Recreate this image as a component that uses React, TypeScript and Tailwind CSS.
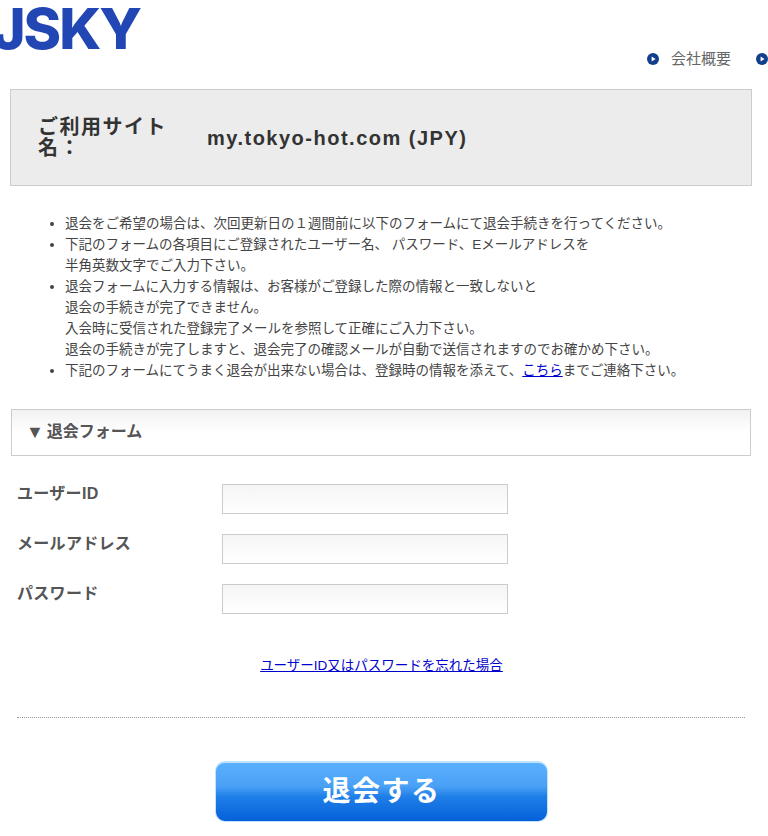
function NavDot() {
  return (
    <svg width="12" height="12" viewBox="0 0 12 12" className="shrink-0">
      <circle cx="6" cy="6" r="6" fill="#123f8c" />
      <path d="M4.6 3.6 L8.6 6 L4.6 8.4 Z" fill="#ffffff" />
    </svg>
  );
}

function Field({ label }: { label: string }) {
  return (
    <div className="flex h-[30px] items-start">
      <label className="w-[211px] pl-[6px] text-[16px] leading-[20px] font-bold tracking-[0.3px] text-[#555]">
        {label}
      </label>
      <input className="h-[30px] w-[286px] border border-[#ccc] bg-gradient-to-b from-[#f5f5f5] to-white" />
    </div>
  );
}

export default function App() {
  return (
    <div className="h-[836px] w-[768px] overflow-hidden bg-white text-[#444] font-['Liberation_Sans','Noto_Sans_CJK_JP',sans-serif]">
      <header className="flex h-[89px] items-start justify-between overflow-hidden">
        <div className="-ml-[8px] mt-[-6px] text-[57px] leading-[70px] font-extrabold tracking-[-2px] text-[#2247b5] font-['Inter',sans-serif]">
          JSKY
        </div>
        <nav className="mt-[49px] flex items-center text-[15px] leading-[20px] text-[#666]">
          <NavDot />
          <span className="ml-[12px] mr-[25px]">会社概要</span>
          <NavDot />
        </nav>
      </header>

      <section className="mx-[10px] flex h-[97px] w-[742px] items-center border border-[#ccc] bg-[#ececec] pl-[27px] font-bold text-[#333] tracking-[1.5px]">
        <div className="w-[169px] text-[20px] leading-[21px]">ご利用サイト名：</div>
        <div className="text-[20px] leading-[24px]">my.tokyo-hot.com (JPY)</div>
      </section>

      <ul className="mt-[27px] ml-[65px] list-disc text-[13.5px] leading-[21px] text-[#444]">
        <li>退会をご希望の場合は、次回更新日の１週間前に以下のフォームにて退会手続きを行ってください。</li>
        <li>
          下記のフォームの各項目にご登録されたユーザー名、 パスワード、Eメールアドレスを
          <br />
          半角英数文字でご入力下さい。
        </li>
        <li>
          退会フォームに入力する情報は、お客様がご登録した際の情報と一致しないと
          <br />
          退会の手続きが完了できません。
          <br />
          入会時に受信された登録完了メールを参照して正確にご入力下さい。
          <br />
          退会の手続きが完了しますと、退会完了の確認メールが自動で送信されますのでお確かめ下さい。
        </li>
        <li>
          下記のフォームにてうまく退会が出来ない場合は、登録時の情報を添えて、
          <a href="#" className="text-[#00c] underline">こちら</a>
          までご連絡下さい。
        </li>
      </ul>

      <h2 className="mx-[11px] mt-[28px] flex h-[47px] w-[740px] items-center border border-[#ccc] bg-gradient-to-b from-[#f2f2f2] via-white to-white pl-[14px] pb-[1px] text-[16px] font-bold text-[#555]">
        <span className="text-[18px] leading-none">▼</span>
        <span className="ml-[3px]">退会フォーム</span>
      </h2>

      <div className="mt-[28px] ml-[11px] flex flex-col gap-[20px]">
        <Field label="ユーザーID" />
        <Field label="メールアドレス" />
        <Field label="パスワード" />
      </div>

      <div className="mt-[42px] mr-[5px] text-center text-[13.5px] leading-[20px]">
        <a href="#" className="text-[#00c] underline">ユーザーID又はパスワードを忘れた場合</a>
      </div>

      <div className="mx-[17px] mt-[41px] w-[728px] border-t border-dotted border-[#999]" />

      <div className="mt-[43px] flex justify-center">
        <button className="ml-[-5px] h-[61px] w-[333px] rounded-[10px] border border-t-2 border-[#bfe3ff] bg-[linear-gradient(#5ab0ff_0%,#4aa0f5_40%,#1f7fe8_58%,#0560d8_100%)] text-[28px] font-bold tracking-[1.5px] text-white">
          退会する
        </button>
      </div>
    </div>
  );
}
